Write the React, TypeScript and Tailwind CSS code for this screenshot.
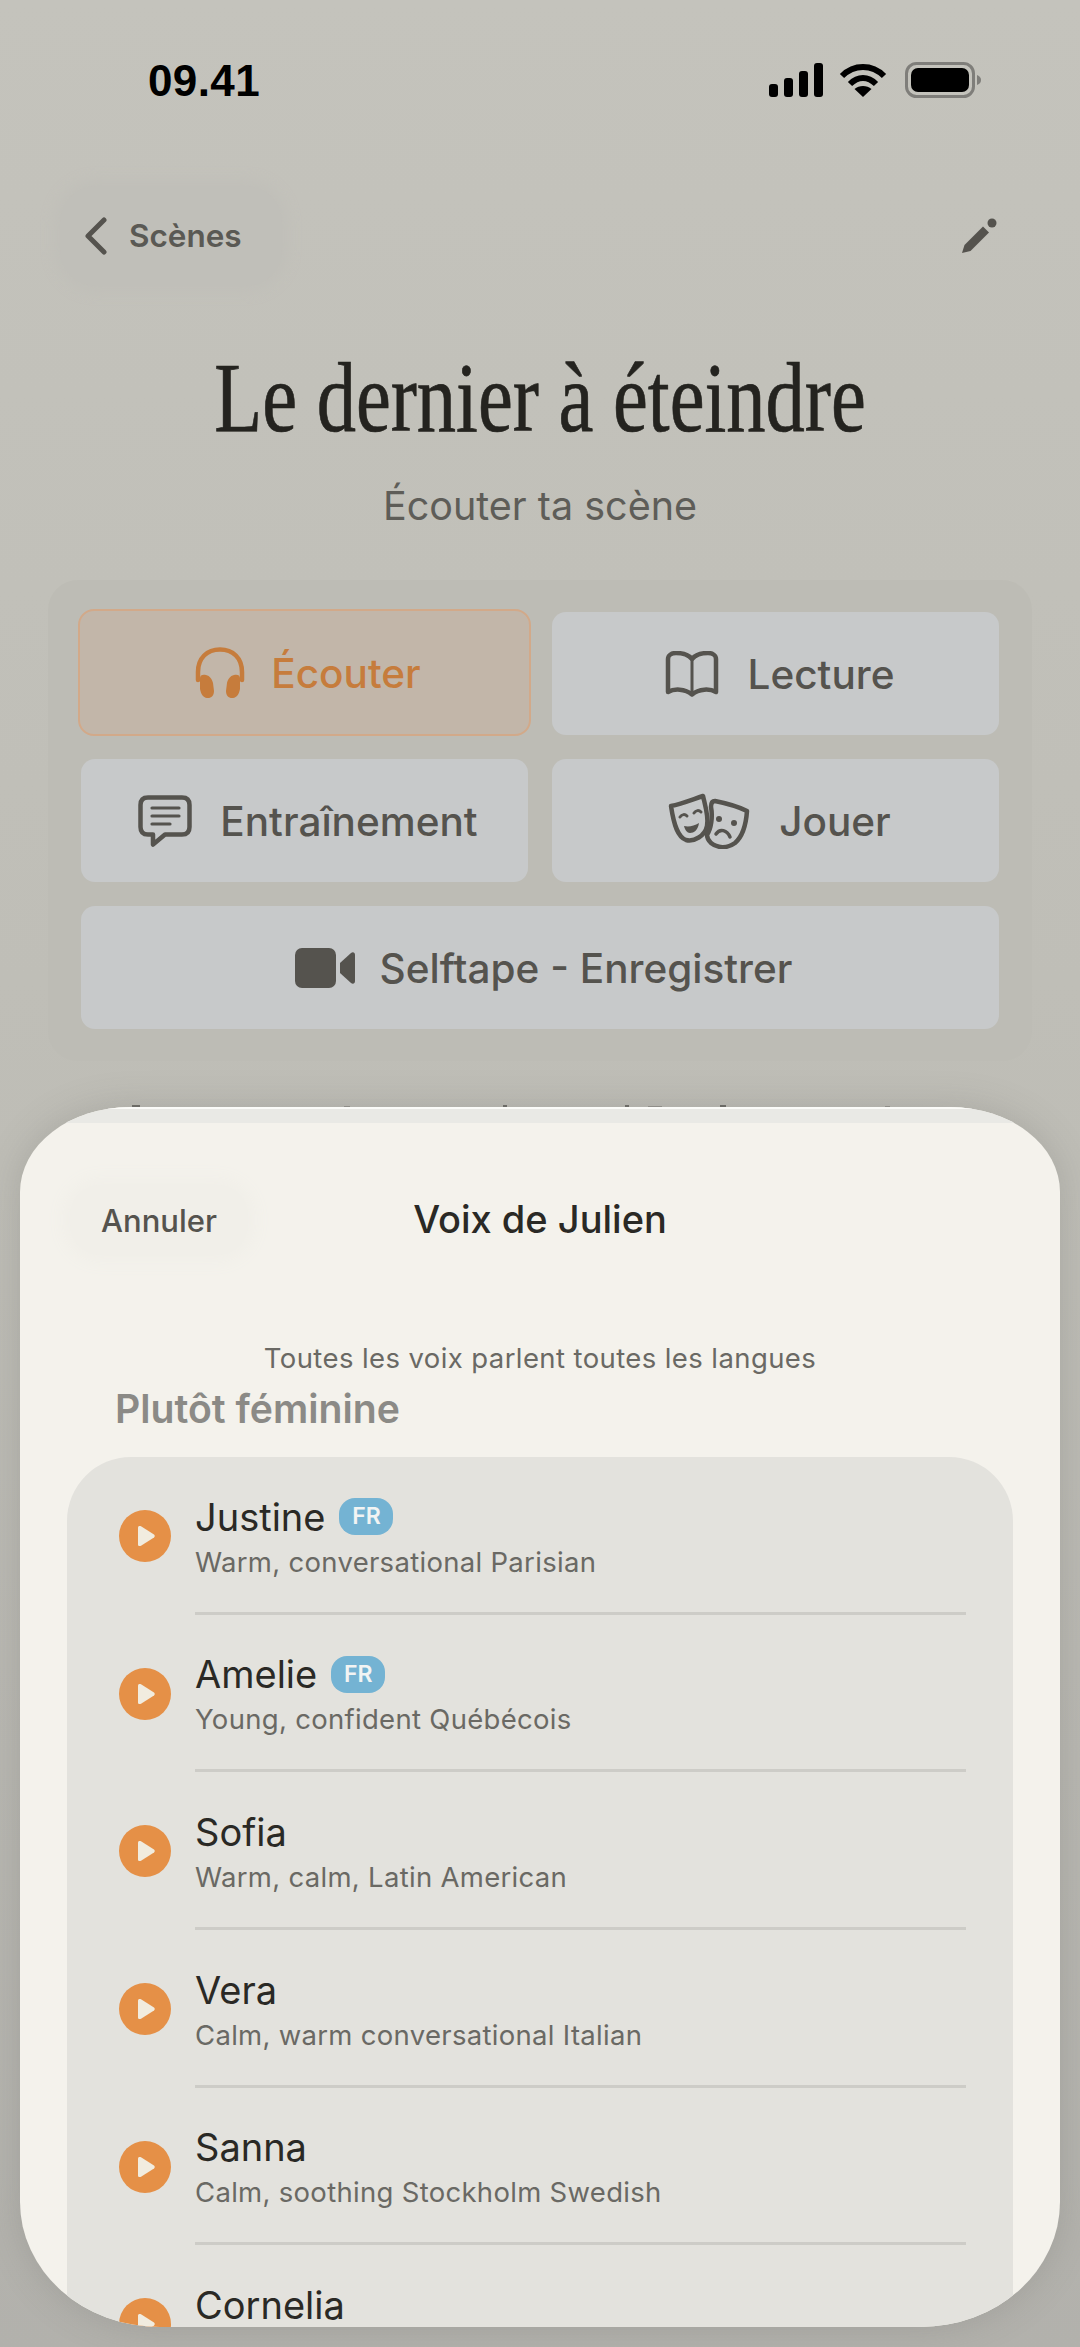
const sans = 'font-["Inter",sans-serif]';

type Voice = { name: string; desc?: string; fr?: boolean };

const voices: Voice[] = [
  { name: 'Justine', desc: 'Warm, conversational Parisian', fr: true },
  { name: 'Amelie', desc: 'Young, confident Québécois', fr: true },
  { name: 'Sofia', desc: 'Warm, calm, Latin American' },
  { name: 'Vera', desc: 'Calm, warm conversational Italian' },
  { name: 'Sanna', desc: 'Calm, soothing Stockholm Swedish' },
  { name: 'Cornelia' },
];

function StatusIcons() {
  return (
    <div className="flex items-center">
      <svg width="55" height="34" viewBox="0 0 55 34" fill="#000" className="mr-[15px]">
        <rect x="0" y="21" width="9" height="13" rx="3" />
        <rect x="15" y="15" width="9" height="19" rx="3" />
        <rect x="30" y="8" width="9" height="26" rx="3" />
        <rect x="45" y="0" width="9" height="34" rx="3" />
      </svg>
      <svg width="48" height="34" viewBox="0 0 48 34" fill="none" stroke="#000" strokeWidth="6" className="mr-[18px]">
        <path d="M3 13C15 1 33 1 45 13" />
        <path d="M11 21C19 13 29 13 37 21" />
        <path d="M24 34L15.5 26C20 22 28 22 32.5 26Z" fill="#000" stroke="none" />
      </svg>
      <svg width="76" height="36" viewBox="0 0 76 36">
        <rect x="1.5" y="1.5" width="67" height="33" rx="10" fill="none" stroke="#7f7e7a" strokeWidth="3" />
        <rect x="6" y="6" width="58" height="24" rx="7" fill="#000" />
        <path d="M72 13C75 14 76 16 76 18C76 20 75 22 72 23Z" fill="#7f7e7a" />
      </svg>
    </div>
  );
}

function Headphones() {
  return (
    <svg width="50" height="52" viewBox="0 0 50 52" fill="none">
      <path d="M3 33V25C3 11 12 2.500 25 2.500C38 2.500 47 11 47 25V33" stroke="#c67c3c" strokeWidth="4.500" strokeLinecap="round" />
      <path d="M5 31C5 28 8 27 11 28C15 29 17 32 18 36L19 44C19 49 16 51.500 12 51C8 50.500 6 47 5 42Z" fill="#c67c3c" />
      <path d="M45 31C45 28 42 27 39 28C35 29 33 32 32 36L31 44C31 49 34 51.500 38 51C42 50.500 44 47 45 42Z" fill="#c67c3c" />
    </svg>
  );
}

function Book() {
  return (
    <svg width="56" height="46" viewBox="0 0 54 46" fill="none" stroke="#55534e" strokeWidth="4.500" strokeLinejoin="round" strokeLinecap="round">
      <path d="M27 8C23 3 17 2 11 2C7 2 3 4 3 8V41C9 37.500 20 37.500 27 43.500C34 37.500 45 37.500 51 41V8C51 4 47 2 43 2C37 2 31 3 27 8Z" />
      <path d="M27 8V43" strokeWidth="3" />
    </svg>
  );
}

function Chat() {
  return (
    <svg width="54" height="52" viewBox="0 0 54 52" fill="none" stroke="#55534e" strokeLinecap="round" strokeLinejoin="round">
      <path d="M10 2.500H44C49 2.500 51.500 5 51.500 10V32C51.500 37 49 39.500 44 39.500H27L15 49.500V39.500H10C5 39.500 2.500 37 2.500 32V10C2.500 5 5 2.500 10 2.500Z" strokeWidth="4.500" />
      <path d="M14 13H41M14 21H41M14 29H32" strokeWidth="3.200" />
    </svg>
  );
}

function Masks() {
  return (
    <svg width="84" height="56" viewBox="0 0 84 56" fill="none" stroke="#55534e" strokeWidth="4.500" strokeLinecap="round" strokeLinejoin="round">
      <path d="M4 13C14 11 24 7 36 3C38 12 42 24 40 33C38 43 27 49 19 47C11 44 7 33 4 13Z" />
      <path d="M13 24C15 21 18 21 20 23M27 20C29 17 32 17 34 19" strokeWidth="3" />
      <path d="M17 33C22 34 27 33 32 30C31 37 27 40 23 40C20 40 18 37 17 33Z" fill="#55534e" stroke="none" />
      <path d="M48 8C58 10 70 13 80 18C79 32 75 44 68 50C60 56 50 55 44 50C41 47 40 44 40 42C44 36 46 24 44 14C44 11 45 8 48 8Z" />
      <circle cx="52" cy="26" r="3" fill="#55534e" stroke="none" />
      <circle cx="67" cy="30" r="3" fill="#55534e" stroke="none" />
      <path d="M49 41C53 35 60 37 63 44" strokeWidth="3.500" />
    </svg>
  );
}

function Camera() {
  return (
    <svg width="60" height="40" viewBox="0 0 60 40" fill="#55534e">
      <rect x="0" y="0" width="41" height="40" rx="7" />
      <path d="M45 15L56 5C58 3.500 60 4.500 60 7V33C60 35.500 58 36.500 56 35L45 25Z" />
    </svg>
  );
}

function ActionButton({ icon, label, gap, active }: { icon: React.ReactNode; label: string; gap: string; active?: boolean }) {
  return (
    <div
      className={
        active
          ? `flex h-[127px] -m-[3px] items-center justify-center rounded-[16px] border-2 border-[#d2a989] bg-[#c2b6a9] pl-[7px] ${gap}`
          : `flex h-[123px] items-center justify-center rounded-[14px] bg-[#c7c9ca] pl-[7px] ${gap}`
      }
    >
      {icon}
      <span className={`mt-[3px] text-[40.5px] font-medium leading-none ${active ? 'text-[#c67c3c]' : 'text-[#55534e]'}`}>{label}</span>
    </div>
  );
}

function VoiceRow({ voice, last }: { voice: Voice; last: boolean }) {
  return (
    <div className="flex h-[157.700px] shrink-0 items-start pl-[52px] pr-[47px]">
      <div className="mt-[53px] mr-[24px] flex h-[52px] w-[52px] shrink-0 items-center justify-center rounded-full bg-[#e59047]">
        <svg width="20" height="22" viewBox="0 0 20 22" className="ml-[2px]">
          <path d="M2 2.500C2 1 3.500 0.500 5 1.300L18 9.500C19 10.300 19 11.700 18 12.500L5 20.700C3.500 21.500 2 21 2 19.500Z" fill="#f1ecdf" />
        </svg>
      </div>
      <div className={`flex h-full flex-1 flex-col ${last ? '' : 'border-b-[3px] border-[#cdccc7]'}`}>
        <div className="mt-[36.500px] flex h-[46px] items-center gap-[14px]">
          <span className="text-[38px] leading-none text-[#2a2925]">{voice.name}</span>
          {voice.fr && (
            <span className="flex h-[37px] w-[54px] items-center justify-center rounded-[16px] bg-[#74b3d3] text-[23px] font-semibold leading-none text-[#f2f4f3]">FR</span>
          )}
        </div>
        {voice.desc && <div className="mt-[4px] text-[27.500px] leading-[36px] tracking-[0.3px] text-[#6a6964]">{voice.desc}</div>}
      </div>
    </div>
  );
}

export default function App() {
  return (
    <div className={`relative h-[2347px] w-[1080px] overflow-hidden bg-gradient-to-b from-[#c4c3bc] via-[#bebdb6] to-[#b2b1ac] ${sans}`}>
      {/* status bar */}
      <div className="flex h-[160px] items-start justify-between pl-[148px] pr-[99px] pt-[59px]">
        <span className="text-[44px] font-bold leading-[44px] tracking-[0.4px] text-black font-['Liberation_Sans',sans-serif]">09.41</span>
        <div className="pt-[3px]">
          <StatusIcons />
        </div>
      </div>

      {/* nav */}
      <div className="flex h-[183px] items-start justify-between pl-[60px] pr-[83px] pt-[26px]">
        <div className="flex h-[100px] items-center gap-[21px] rounded-[36px] bg-[#c0bfb9] pl-[24px] pr-[40px] shadow-[0_0_14px_6px_#c0bfb9]">
          <svg width="24" height="38" viewBox="0 0 24 38" fill="none" stroke="#55534e" strokeWidth="5" strokeLinecap="round" strokeLinejoin="round">
            <path d="M20 3L4 19L20 35" />
          </svg>
          <span className="text-[31.500px] font-semibold leading-none text-[#5a5954]">Scènes</span>
        </div>
        <svg width="36" height="36" viewBox="0 0 36 36" className="mt-[32px]" fill="#55534e">
          <path d="M1 35L3.500 27L22 8.500L28 14.500L9.500 33Z" />
          <circle cx="31" cy="5" r="4.500" />
        </svg>
      </div>

      {/* title */}
      <h1 className="scale-x-[0.785] text-center font-['Liberation_Serif',serif] text-[100px] font-normal leading-[110px] text-[#24231f] [-webkit-text-stroke:0.7px_#24231f]">
        Le dernier à éteindre
      </h1>
      <p className="mt-[29px] text-center text-[39.500px] leading-[48px] text-[#5e5d58]">Écouter ta scène</p>

      {/* actions */}
      <div className="mx-[48px] mt-[50px] flex flex-col gap-[24px] rounded-[30px] bg-[#bdbcb5] px-[33px] py-[32px]">
        <div className="grid grid-cols-2 gap-[24px]">
          <ActionButton active gap="gap-[26px]" icon={<Headphones />} label="Écouter" />
          <ActionButton gap="gap-[28px]" icon={<Book />} label="Lecture" />
          <ActionButton gap="gap-[28px]" icon={<Chat />} label="Entraînement" />
          <ActionButton gap="gap-[28px]" icon={<Masks />} label="Jouer" />
        </div>
        <ActionButton gap="gap-[25px]" icon={<Camera />} label="Selftape - Enregistrer" />
      </div>

      {/* tops of the text hidden behind the sheet */}
      <svg width="1080" height="4" viewBox="0 0 1080 4" className="absolute left-0 top-[1104px]" fill="#6f6e69">
        <rect x="132" y="1" width="8" height="3" />
        <rect x="344" y="2" width="6" height="2" opacity="0.5" />
        <rect x="503" y="1" width="4" height="3" />
        <rect x="625" y="1" width="4" height="3" />
        <rect x="648" y="2" width="14" height="2" opacity="0.5" />
        <rect x="720" y="1" width="6" height="3" />
        <rect x="885" y="2" width="5" height="2" opacity="0.5" />
      </svg>

      {/* voice sheet */}
      <div className="absolute left-[20px] top-[1107px] flex h-[1220px] w-[1040px] flex-col overflow-hidden rounded-tl-[110px_85px] rounded-tr-[110px_85px] rounded-bl-[140px_125px] rounded-br-[140px_125px] bg-[#f4f2ec] shadow-[0_0_36px_rgba(90,90,85,0.22)]">
        <div className="h-[16px] shrink-0 border-t-2 border-[#fbfbf8] bg-[#e9e9e5]" />
        <div className="relative flex h-[192px] shrink-0 justify-center pt-[73px]">
          <span className="text-[38px] font-medium leading-[46px] text-[#2a2925]">Voix de Julien</span>
          <div className="absolute left-[50px] top-[62px] flex h-[70px] w-[178px] items-center justify-center rounded-[30px] bg-[#f1efe9] shadow-[0_0_16px_8px_#f1efe9]">
            <span className="text-[31px] font-medium leading-none text-[#55534e]">Annuler</span>
          </div>
        </div>
        <p className="mt-[25px] text-center text-[27.500px] leading-[36px] tracking-[0.4px] text-[#6a6964]">Toutes les voix parlent toutes les langues</p>
        <h2 className="mt-[10px] pl-[95px] text-[39.200px] font-semibold leading-[46px] text-[#8b8a86]">Plutôt féminine</h2>
        <div className="mx-[47px] mt-[25px] flex flex-1 flex-col overflow-hidden rounded-t-[64px] bg-[#e3e2dd]">
          {voices.map((voice, i) => (
            <VoiceRow key={voice.name} voice={voice} last={i === voices.length - 1} />
          ))}
        </div>
      </div>
    </div>
  );
}
